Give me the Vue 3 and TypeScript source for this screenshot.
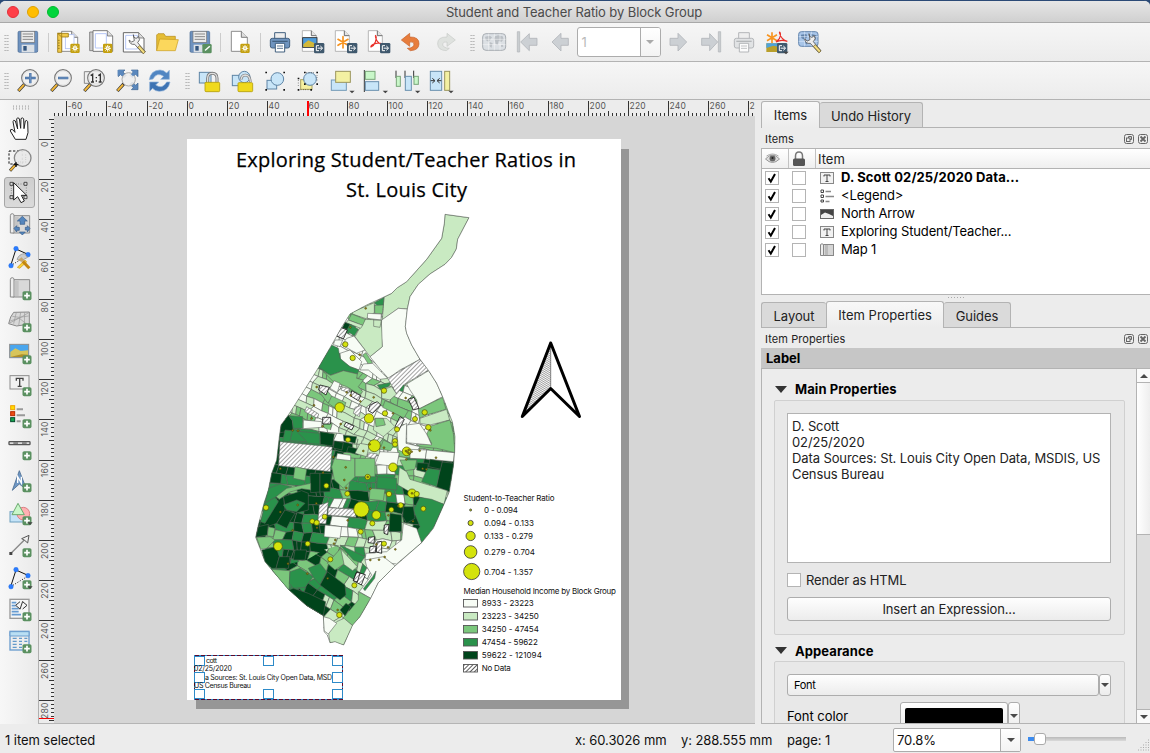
<script setup lang="ts">
type Pt = [number, number]
interface Shape { c: number | 'h' | 'b'; p: string }
interface Dot { x: number; y: number; r: number }

const palette = ['#f7fcf5', '#c9eac2', '#7bc77c', '#2a924b', '#00441b']

/* ---------- icons (72-unit grid) ---------- */
const gold = (x: number, y: number) => `<g transform="translate(${x} ${y})"><rect width="28" height="28" rx="4" fill="#c4a00f"/><path d="M14 4v20M4 14h20M7 7l14 14M21 7L7 21" stroke="#fff" stroke-width="2.6"/><circle cx="14" cy="14" r="6" fill="#fff"/><circle cx="14" cy="14" r="3" fill="#e3cf7a"/></g>`
const plus = `<g transform="translate(43.500 42.500)"><rect width="27" height="27" rx="5" fill="#5a9060"/><path d="M13.500 5v17M5 13.500h17" stroke="#fff" stroke-width="5"/></g>`
const exp = (x: number, y: number) => `<g transform="translate(${x} ${y})"><rect width="31" height="31" rx="4" fill="#40596e"/><path d="M15 8H7v15h8M11 15.500h13M19 9l7 6.500-7 6.500" stroke="#fff" stroke-width="3" fill="none"/></g>`
const drop = (x: number, y: number) => `<path d="M${x} ${y}h16l-8 8z" fill="#444"/>`
const mag = `<path d="M27 44L7 66" stroke="#333" stroke-width="10"/><path d="M24 47L8 65" stroke="#f4b93a" stroke-width="6"/>`
const lens = `<circle cx="42" cy="27" r="25" fill="#f1f1f1" fill-opacity=".85" stroke="#777" stroke-width="3.500"/><circle cx="42" cy="27" r="21" fill="none" stroke="#ddd" stroke-width="2"/>`
const floppy = `<rect x="6" y="4" width="59" height="63" rx="4" fill="#6e92bf" stroke="#47678f" stroke-width="2"/><rect x="15" y="4" width="41" height="33" fill="#ececec" stroke="#777" stroke-width="2"/><path d="M20 12h31M20 20h31M20 28h31" stroke="#888" stroke-width="3"/><rect x="17" y="44" width="38" height="23" fill="#dbe0e6"/><rect x="22" y="48" width="10" height="14" fill="#34567f"/>`
const sheet = (x: number) => `<path d="M${x} 4h30l18 18v42h-48z" fill="#fff" stroke="#777" stroke-width="2.500"/><path d="M${x + 30} 4v18h18" fill="#ddd" stroke="#666" stroke-width="2.500"/>`
const scroll = `<path d="M14 8h51v52H14z" fill="#d9d9d9" stroke="#8a8a8a" stroke-width="3"/><path d="M7 8q0-6 6-6q5 0 5 6v52H7z" fill="#eee" stroke="#8a8a8a" stroke-width="3"/><path d="M20 12h12v45H20z" fill="#c5c5c5"/>`
const worldmap = (o: string) => `<g opacity="${o}"><rect x="2" y="11" width="69" height="50" rx="10" fill="#d4dae0" stroke="#8e959c" stroke-width="3"/><path d="M9 20l14-3 7 5-6 9-5 4-8-5zM23 36l9 4-4 14-5-6zM39 19l9-3 14 3 3 9-7 8-8-3-3 12-6-3-2-10-4-4zM57 45l6 0 1 5-7 0z" fill="#a6adb4"/><path d="M2 28h69M2 44h69M20 11v50M37 11v50M54 11v50" stroke="#fff" stroke-width="1.500"/></g>`
const printer = (body: string, line: string, o: string) => `<g opacity="${o}"><path d="M20 8h32v22H20z" fill="#eee" stroke="${line}" stroke-width="3"/><rect x="7" y="25" width="58" height="29" rx="6" fill="${body}" stroke="${line}" stroke-width="3"/><path d="M13 34h46" stroke="${line}" stroke-width="4"/><path d="M22 40h28v26H22z" fill="#fff" stroke="${line}" stroke-width="3"/><path d="M27 48h18M27 55h18" stroke="${line}" stroke-width="2.500"/></g>`
const wrench = `<path d="M33 11q-1 10 8 11q6-1 7-6q8 11-2 19l23 27-7 6-25-28q-15 2-17-13l8 6 8-4z" fill="#eee" stroke="#555" stroke-width="2.500"/><path d="M52 44l17 19-6 5-17-19z" fill="#f3dd7e" stroke="#69592a" stroke-width="2"/>`
const corners = `<path d="M7 12h5v5H7zM61 12h5v5h-5zM7 64h5v5H7zM61 64h5v5h-5z" fill="#111"/>`
const nodes = `<path d="M24 12L8 62M24 12L62 29" stroke="#111" stroke-width="3"/><path d="M8 62L62 29" stroke="#111" stroke-width="3" stroke-dasharray="3 5"/><g fill="#2a7bff" stroke="#1763dc"><circle cx="24" cy="11" r="7"/><circle cx="60" cy="29" r="7"/><circle cx="9" cy="62" r="7"/></g>`
const pic = `<rect x="5" y="10" width="57" height="40" fill="#4aa6ee" stroke="#8c8c8c" stroke-width="3"/><path d="M7 33l15-11 16 8 22-2v20H7z" fill="#d7c55b"/><path d="M7 48l34-8 19 1v7z" fill="#af8f28"/>`

const icons: Record<string, string> = {
  save: floppy,
  newLayout: `${sheet(17)}<rect x="28" y="14" width="26" height="42" fill="#fff" stroke="#aebff0" stroke-width="2.500"/><path d="M5 10h12v57H5zM5 10h32v11H17z" fill="#f1ca4b" stroke="#9d7c14" stroke-width="2.500"/><path d="M6 31h5M6 39h5M6 47h5M6 55h5" stroke="#77600f" stroke-width="2"/>${gold(43, 41)}`,
  duplicate: `<path d="M2 6h48v56H2z" fill="#ccc" stroke="#777" stroke-width="2.500"/><path d="M12 2h43l16 16v46H12z" fill="#fff" stroke="#666" stroke-width="2.500"/><path d="M55 2v16h16" fill="#ddd" stroke="#555" stroke-width="2"/><path d="M19 11h33v43H19z" fill="none" stroke="#b6c7f6" stroke-width="3"/>${gold(42, 41)}`,
  manager: `<path d="M4 8h46l16 16v42H4z" fill="#fff" stroke="#666" stroke-width="3"/><path d="M50 8v16h16" fill="#ddd" stroke="#555" stroke-width="2"/><path d="M11 16h35v41H11z" fill="none" stroke="#b6c7f6" stroke-width="3"/><g transform="translate(1 3)">${wrench}</g>`,
  folder: `<path d="M5 62V15l4-4h18l5 8h29v10" fill="#e5bd35" stroke="#b38a18" stroke-width="2"/><path d="M5 62l9-35 56 2-9 33z" fill="#fbd75c" stroke="#c79b20" stroke-width="2"/>`,
  saveAs: `${floppy}<rect x="43" y="42" width="28" height="28" rx="4" fill="#5a9060"/><path d="M50 64l2-6 12-11 3 3-12 11z" fill="#fff"/>`,
  addPages: `${sheet(10)}${gold(37, 41)}`,
  print: printer('#6f94bf', '#42607f', '1'),
  exportImage: `<path d="M4 2h27l15 15v47H4z" fill="#fff" stroke="#aaa" stroke-width="2.500"/><path d="M31 2v15h15" fill="#e4e4e4" stroke="#555" stroke-width="2.500"/><rect x="5" y="23" width="43" height="29" fill="#4f9cda" stroke="#222" stroke-width="2.500"/><path d="M7 43l15-12 24 11v9H7z" fill="#d3b838"/>${exp(39, 39)}`,
  exportSvg: `<path d="M4 2h27l15 15v47H4z" fill="#fff" stroke="#aaa" stroke-width="2.500"/><path d="M31 2v15h15" fill="#e4e4e4" stroke="#555" stroke-width="2.500"/><path d="M27 20v34M12 28l30 18M42 28L12 46" stroke="#f79420" stroke-width="5" stroke-linecap="round"/>${exp(39, 39)}`,
  exportPdf: `<path d="M4 2h27l15 15v47H4z" fill="#fff" stroke="#aaa" stroke-width="2.500"/><path d="M31 2v15h15" fill="#e4e4e4" stroke="#555" stroke-width="2.500"/><path d="M24 16q7 2 1 20q-4 11-13 15q-3-5 12-10q15-4 20 0q-14 1-19-22" fill="none" stroke="#e9302a" stroke-width="3.500"/>${exp(39, 39)}`,
  undo: `<path d="M4 30L29 10v11q29-1 28 21q-1 19-26 20l-9-7q20-1 20-13q-1-8-13-6v13z" fill="#e77d3c" stroke="#c5602b" stroke-width="2"/>`,
  redo: `<path d="M67 30L42 10v11q-29-1-28 21q1 19 26 20l9-7q-20-1-20-13q1-8 13-6v13z" fill="#dfe2df" stroke="#c7cac7" stroke-width="2"/>`,
  atlas: worldmap('.72'),
  first: `<path d="M7 5h7v61H7z" fill="#c9cdd0" stroke="#b0b4b8" stroke-width="2"/><path d="M17 36L43 11v14h23v21H43v16z" fill="#ccd0d4" stroke="#b2b6ba" stroke-width="2.500"/>`,
  prev: `<path d="M12 36L39 10v15h22v21H39v17z" fill="#ccd0d4" stroke="#b2b6ba" stroke-width="2.500"/>`,
  next: `<path d="M62 36L36 10v15H12v21h24v17z" fill="#ccd0d4" stroke="#b2b6ba" stroke-width="2.500"/>`,
  last: `<path d="M58 5h7v61h-7z" fill="#c9cdd0" stroke="#b0b4b8" stroke-width="2"/><path d="M56 36L32 11v14H8v21h24v16z" fill="#ccd0d4" stroke="#b2b6ba" stroke-width="2.500"/>`,
  printAtlas: printer('#dfe1e3', '#aaadb0', '.85'),
  exportAtlas: `<path d="M21 7v32M6 14l30 18M36 14L6 32" stroke="#f79420" stroke-width="5"/><path d="M43 5q7 5 0 21l-10 10q15-9 34-2q-18-4-24-27" fill="none" stroke="#e9302a" stroke-width="3.500"/><path d="M4 40h38v26H4z" fill="#b99f2b"/><path d="M4 40h38v11l-17-4-21 7z" fill="#4fa3da"/>${exp(36, 39)}${drop(55, 65)}`,
  atlasSettings: `<rect x="2" y="5" width="58" height="44" rx="8" fill="#a8c5e8" stroke="#6485ae" stroke-width="3"/><path d="M9 14l16-2 3 9-9 8-9-5zM23 30l8 2-4 12-6-5zM39 12l17 4-4 15-12-2z" fill="#6283aa"/><path d="M2 20h58M2 34h58M20 5v44M40 5v44" stroke="#dbeafa" stroke-width="2"/>${wrench}`,
  zoomIn: `${mag}${lens}<path d="M43 12v31M27 27h32" stroke="#41699d" stroke-width="7"/><path d="M43 13v29M28 27h30" stroke="#6b92c3" stroke-width="3"/>`,
  zoomOut: `${mag}${lens}<path d="M27 27h31" stroke="#41699d" stroke-width="7"/><path d="M28 27h29" stroke="#7ba0cc" stroke-width="3"/>`,
  zoomActual: `<path d="M7 8h50v35H7z" fill="#eee" stroke="#888" stroke-width="3"/>${mag}${lens}<path d="M26 20l6-4v23M49 20l6-4v23M27 39h9M50 39h9" fill="none" stroke="#333" stroke-width="4"/><path d="M41 24h4v4h-4zM41 34h4v4h-4z" fill="#333"/>`,
  zoomFull: `<path d="M10 3h20L24 9l10 10-7 7-10-10-7 7zM69 3H49l6 6-10 10 7 7 10-10 7 7zM69 62H49l6-6-10-10 7-7 10 10 7-7z" fill="#5b88bd" stroke="#3d648f" stroke-width="2"/>${mag}<circle cx="41" cy="31" r="20" fill="#eee" fill-opacity=".88" stroke="#aaa" stroke-width="3"/><path d="M8 3h18l-6 6 7 7-6 6-7-7-6 6z" fill="#5b88bd"/><path d="M66 4H50l5 5-7 7 6 6 7-7 5 5z" fill="#5b88bd"/>`,
  refresh: `<path d="M4 32Q8 4 36 3q11 0 20 9l8-8v27H38l9-9q-20-14-32 8z" fill="#5186c2" stroke="#8fb2da" stroke-width="2"/><path d="M66 39q-5 28-32 28q-13 0-20-9l-9 9V39h27l-9 9q20 14 33-9z" fill="#3d73b3" stroke="#8fb2da" stroke-width="2"/>`,
  lock: `<rect x="7" y="10" width="35" height="32" fill="#c8e5f8" stroke="#5e84a5" stroke-width="3"/><path d="M32 41V28q0-15 14-15t14 15v13" fill="none" stroke="#777" stroke-width="9"/><path d="M32 41V28q0-15 14-15t14 15v13" fill="none" stroke="#ddd" stroke-width="4"/><rect x="24" y="40" width="44" height="28" rx="3" fill="#f0d91c" stroke="#b39d0b" stroke-width="2.500"/>`,
  unlock: `<rect x="7" y="19" width="31" height="31" fill="#c8e5f8" stroke="#5e84a5" stroke-width="3"/><circle cx="43" cy="24" r="17" fill="#c8e5f8" stroke="#5e84a5" stroke-width="3"/><path d="M33 32q2-14 14-14q13 1 14 22" fill="none" stroke="#777" stroke-width="8"/><path d="M33 32q2-14 14-14q13 1 14 22" fill="none" stroke="#ddd" stroke-width="4"/><rect x="24" y="41" width="44" height="27" rx="3" fill="#f0d91c" stroke="#b39d0b" stroke-width="2.500"/>`,
  group: `<g transform="translate(0 -4)"><rect x="12" y="38" width="29" height="26" fill="#c8e5f8" stroke="#5e84a5" stroke-width="3"/><circle cx="43" cy="34" r="19" fill="#c8e5f8" stroke="#5e84a5" stroke-width="3"/>${corners}</g>`,
  ungroup: `<rect x="14" y="32" width="34" height="29" fill="#f5f0a0" stroke="#aaa362" stroke-width="3"/><circle cx="42" cy="30" r="19" fill="#c8e5f8" stroke="#5e84a5" stroke-width="3"/><g fill="#111"><path d="M24 8h5v5h-5zM61 8h5v5h-5zM24 43h5v5h-5zM61 43h5v5h-5zM5 26h5v5H5zM5 60h5v5H5zM43 60h5v5h-5z"/></g><path d="M31 11h25M7 34v21M14 62h25M63 18v20" stroke="#111" stroke-width="2" stroke-dasharray="2 5"/>`,
  raise: `<rect x="7" y="33" width="45" height="31" fill="#c8e5f8" stroke="#749ab6" stroke-width="3"/><rect x="20" y="7" width="44" height="33" fill="#f3f0a2" stroke="#9b955d" stroke-width="3"/>${drop(61, 65)}`,
  align: `<path d="M7 3v66" stroke="#333" stroke-width="3"/><rect x="10" y="7" width="29" height="24" fill="#c9f7c9" stroke="#79a679" stroke-width="3"/><rect x="10" y="38" width="40" height="26" fill="#c8e5f8" stroke="#6a90ae" stroke-width="3"/>${drop(62, 65)}`,
  distribute: `<path d="M3 5v22M30 5v22M56 5v22" stroke="#333" stroke-width="3"/><rect x="4" y="22" width="12" height="30" fill="#c9f7c9" stroke="#79a679" stroke-width="3"/><rect x="31" y="22" width="18" height="42" fill="#c8e5f8" stroke="#6a90ae" stroke-width="3"/><rect x="57" y="22" width="13" height="24" fill="#c9f7c9" stroke="#79a679" stroke-width="3"/>${drop(60, 65)}`,
  resize: `<rect x="7" y="7" width="34" height="57" fill="#c8e5f8" stroke="#6a90ae" stroke-width="3"/><rect x="50" y="7" width="15" height="57" fill="#f3f0a2" stroke="#9b955d" stroke-width="3"/><path d="M8 35h11M13 28l8 7-8 7M40 35H29M35 28l-8 7 8 7" stroke="#333" stroke-width="3" fill="none"/>${drop(61, 65)}`,
  pan: `<path d="M22 70L7 45q-1-7 7-4l7 8L15 17q1-7 7-2l7 24L26 9q2-7 8-1l4 29L39 8q5-6 8 1l1 29 4-23q5-4 7 2l1 33-6 20z" fill="#fff" stroke="#222" stroke-width="3"/>`,
  zoomTool: `<path d="M3 9h40v39H3z" fill="none" stroke="#111" stroke-width="3" stroke-dasharray="7 5"/><path d="M26 46L6 68" stroke="#333" stroke-width="9"/><path d="M22 51L7 67" stroke="#edb43c" stroke-width="6"/><circle cx="44" cy="30" r="25" fill="#e8e8e8" fill-opacity=".93" stroke="#888" stroke-width="4"/><path d="M53 20v25M30 42h17" stroke="#aaa" stroke-width="2" stroke-dasharray="2 5"/><path d="M17 50h14M24 43v14" stroke="#111" stroke-width="4"/>`,
  select: `<path d="M10 12h45v39H10z" fill="none" stroke="#333" stroke-width="2" stroke-dasharray="2 5"/><path d="M6 7h9v9H6zM48 7h9v9h-9zM6 47h9v9H6zM48 47h9v9h-9z" fill="#ddd" stroke="#333" stroke-width="2.500"/><path d="M17 8v52l12-10 10 18 10-5-9-17h16z" fill="#fff" stroke="#222" stroke-width="3"/>`,
  moveContent: `${scroll}<path d="M43 10l15 14h-8v10H36V24h-8zM43 66l-9-9h18zM18 46l8-8v5h8v9h-8v5zM66 46l-8-8v5h-6v8h6v6z" fill="#5586bd" stroke="#355b8a" stroke-width="2"/>`,
  editNodes: `${nodes}<path d="M27 43q6-16 22-17l10 11-20 11z" fill="#ccc" stroke="#888" stroke-width="2"/><path d="M28 67l23-22 5 6-21 19z" fill="#f9d237" stroke="#ca941d" stroke-width="2"/><path d="M44 49l20 21" stroke="#c38612" stroke-width="9"/><path d="M30 45l11-8 7 9-6 5z" fill="#c5a66e"/>`,
  addMap: scroll + plus,
  add3d: `<path d="M8 24L17 10l47-1v36l-38 6-24-7z" fill="#d8d8d8" stroke="#888" stroke-width="3"/><path d="M13 22l20 3 29-4M7 36l26-9 25 20M25 10l-8 34M38 10l-6 40M50 10l-1 37M3 43l39-20 20-12" stroke="#999" stroke-width="2" fill="none"/>${plus}`,
  addPicture: pic + plus,
  addLabel: `<rect x="6" y="8" width="57" height="40" fill="#f1f1f1" stroke="#8b8b8b" stroke-width="3"/><path d="M25 23v-7h20v7M35 16v23M29 40h12" fill="none" stroke="#444" stroke-width="4"/>${plus}`,
  addLegend: `<g stroke-width="3"><rect x="8" y="2" width="12" height="12" fill="#ffdc00" stroke="#f0a100"/><rect x="8" y="20" width="12" height="12" fill="#ed4c12" stroke="#b52a00"/><rect x="8" y="38" width="12" height="12" fill="#12a34e" stroke="#064a2b"/></g><path d="M26 13h19M26 31h25M26 49h12" stroke="#999" stroke-width="6"/>${plus}`,
  addScale: `<rect x="3" y="14" width="63" height="9" rx="2" fill="#ddd" stroke="#555" stroke-width="4"/><path d="M16 18h14M42 18h14" stroke="#888" stroke-width="6"/>${plus}`,
  addNorth: `<path d="M34 5l22 57-22-17-21 19z" fill="#6f97c4" stroke="#4a6c91" stroke-width="2.500"/><path d="M29 42V23l11 19V23" stroke="#fff" stroke-width="4" fill="none"/>${plus}`,
  addShape: `<rect x="6" y="29" width="43" height="31" fill="#c5e4f8" stroke="#6d9fbe" stroke-width="3"/><circle cx="46" cy="35" r="19" fill="#ffb0b2" stroke="#d98084" stroke-width="3"/><path d="M30 4L12 38h37z" fill="#c9f7c9" stroke="#6ba96f" stroke-width="3"/>${plus}${drop(58, 61)}`,
  addArrow: `<path d="M9 58L52 15" stroke="#888" stroke-width="4"/><path d="M63 4l-4 23-9-8-9-5z" fill="#eee" stroke="#555" stroke-width="3"/><path d="M4 54h9v9H4z" fill="#444"/>${plus}`,
  addNodes: nodes + plus + drop(58, 61),
  addHtml: `<rect x="6" y="4" width="57" height="57" fill="#f6f6f6" stroke="#999" stroke-width="4"/><path d="M11 14h14M11 23h12M11 32h21M11 41h21M11 50h28" stroke="#669bd1" stroke-width="5"/><path d="M36 11L23 22l13 11M44 11l13 11-13 11M44 10l-8 24" stroke="#333" stroke-width="3" fill="none"/>${plus}`,
  addTable: `<rect x="6" y="4" width="57" height="56" fill="#eee" stroke="#6a9dce" stroke-width="4"/><path d="M6 5h57v13H6z" fill="#b9dff4" stroke="#6a9dce" stroke-width="3"/><path d="M14 25h12M33 25h9M49 25h9M14 34h12M33 34h9M49 34h9M14 43h12M33 43h9M14 52h12M33 52h9" stroke="#639aca" stroke-width="4"/>${plus}`,
}

const bar1: string[] = ['save', '|', 'newLayout', 'duplicate', 'manager', 'folder', 'saveAs', '|', 'addPages', '|', 'print', 'exportImage', 'exportSvg', 'exportPdf', 'undo', 'redo', ':', 'atlas', 'first', 'prev', 'page', 'next', 'last', 'printAtlas', 'exportAtlas', 'atlasSettings']
const bar2: string[] = ['zoomIn', 'zoomOut', 'zoomActual', 'zoomFull', 'refresh', ':', 'lock', 'unlock', 'group', 'ungroup', 'raise', 'align', 'distribute', 'resize']
const tools: string[] = ['pan', 'zoomTool', 'select', 'moveContent', 'editNodes', 'addMap', 'add3d', 'addPicture', 'addLabel', 'addLegend', 'addScale', 'addNorth', 'addShape', 'addArrow', 'addNodes', 'addHtml', 'addTable']

/* ---------- rulers ---------- */
const unit = 2.0055
interface Tick { at: number; kind: number; label: string }
function ticks(zero: number, from: number, to: number): Tick[] {
  const out: Tick[] = []
  for (let u = -80; u <= 300; u += 2) {
    const at = Math.floor(zero + u * unit)
    if (at < from || at > to) continue
    const kind = u % 20 === 0 ? 2 : u % 10 === 0 ? 1 : 0
    out.push({ at, kind, label: kind === 2 ? String(u) : '' })
  }
  return out
}
const hTicks = ticks(187.2, 54, 754)
const vTicks = ticks(139.2, 117, 722)

/* ---------- block groups ---------- */
const income = [
  '000000000221000000000', '000000000341100000000', '000000000011110000000', '000000001001100000000',
  '000000033000210000000', '000000333300010000000', '000000122220000000000', '000000110122113100000',
  '000000200101110010022', '000011022101022201222', '000122000110002200111', '004331020110021000122',
  '004333211011011000122', '004333343411121002222', '004333334221002200000', '044333332222001234344',
  '043424442233333213344', '033233444233333221111', '034344433242230421311', '034434430343344244333',
  '014443400344332434333', '442343440131121440333', '422434310012121200000', '223344411211010110000',
  '034444212131000000000', '034432322211000000000', '003323342330100000000', '003332344310000000000',
  '000344433312000000000', '000044412422000000000', '000004410112200000000', '000000000111000000000', '000000001111000000000',
]
const rnd = (a: number, b: number, k: number): number => {
  const s = Math.sin(a * 127.1 + b * 311.7 + k * 74.7) * 43758.5453
  return s - Math.floor(s)
}
function tone(x: number, y: number): number {
  const row = Math.min(32, Math.max(0, Math.floor((y - 60) / 30)))
  const col = Math.min(20, Math.max(0, Math.floor((x - 40) / 30)))
  return Number(income[row].charAt(col))
}
function lattice(cx: number, cy: number, deg: number, w: number, h: number, n: number, seed: number): Shape[] {
  const a = (deg * Math.PI) / 180
  const v = (i: number, j: number): Pt => {
    const x = i * w + (rnd(i, j, seed) - 0.5) * w * 0.3 + (j % 2) * w * 0.25
    const y = j * h + (rnd(i, j, seed + 1) - 0.5) * h * 0.25
    return [cx + x * Math.cos(a) - y * Math.sin(a), cy + x * Math.sin(a) + y * Math.cos(a)]
  }
  const out: Shape[] = []
  const add = (p: Pt[]) => {
    const x = p.reduce((s, q) => s + q[0], 0) / p.length
    const y = p.reduce((s, q) => s + q[1], 0) / p.length
    if (x < 20 || x > 680 || y < 40 || y > 1090) return
    out.push({ c: tone(x, y), p: p.map(q => q.map(t => t.toFixed(1)).join(',')).join(' ') })
  }
  const mid = (p: Pt, q: Pt): Pt => [(p[0] + q[0]) / 2, (p[1] + q[1]) / 2]
  for (let j = -n; j < n; j++) {
    for (let i = -n; i < n; i++) {
      const r = rnd(i, j, seed + 2)
      const q = [v(i, j), v(i + 1, j), v(i + 1, j + 1), v(i, j + 1)]
      if (r < 0.28) {
        add([q[0], q[1], v(i + 2, j), v(i + 2, j + 1), q[2], q[3]])
        i++
      } else if (r > 0.88) {
        const m = mid(q[0], q[1])
        const k = mid(q[2], q[3])
        add([q[0], m, k, q[3]])
        add([m, q[1], q[2], k])
      } else add(q)
    }
  }
  return out
}
const zones = [
  { id: 'zMid', cells: lattice(330, 600, 5, 27, 28, 22, 3) },
  { id: 'zNorth', cells: lattice(330, 280, 25, 26, 22, 22, 9) },
  { id: 'zSouth', cells: lattice(260, 850, 34, 33, 28, 16, 5) },
]

const outline = '615,-227 687,-217 653,-152 649,-123 635,-98 615,-77 570,-48 535,-17 510,20 502,57 496,110 500,130 515,165 540,208 566,242 590,280 610,325 625,365 637,395 645,440 644,485 640,530 628,605 612,643 580,715 545,758 465,828 415,878 392,925 360,980 338,1005 311,1065 285,1055 270,1058 262,1035 252,1025 250,977 200,947 147,900 100,845 75,815 60,775 47,742 55,705 72,640 85,600 95,550 110,510 118,440 123,405 145,375 190,305 236,232 275,165 305,112 330,72 380,45 432,21 455,10 472,-7 500,-25 560,-92 605,-155 613,-200'

const north: Shape[] = [
  { c: 1, p: '432,21 455,10 472,-7 500,-25 560,-92 605,-155 613,-200 615,-227 687,-217 653,-152 649,-123 635,-98 615,-77 570,-48 535,-17 510,20 502,57 475,55 427,90' },
  { c: 0, p: '425,90 475,55 502,57 496,110 500,130 515,165 540,208 480,240 445,265 418,235 390,200 427,170 423,130' },
  { c: 1, p: '375,88 424,90 427,170 390,200 345,140 360,112' },
  { c: 1, p: '335,67 403,38 403,68 378,86 340,73' },
  { c: 3, p: '403,38 432,22 430,45 415,50' },
  { c: 2, p: '404,46 430,45 427,72 404,70' },
  { c: 0, p: '383,70 424,72 423,90 382,85' },
  { c: 1, p: '401,90 424,91 420,112 401,109' },
  { c: 2, p: '335,72 376,88 368,106 325,90' },
  { c: 1, p: '325,90 368,106 362,115 318,98' },
  { c: 4, p: '315,97 335,105 325,120 307,113' },
  { c: 3, p: '330,103 355,118 343,138 320,122' },
  { c: 0, p: '342,138 375,180 350,190 305,165 320,145' },
  { c: 0, p: '300,190 330,180 365,215 357,240 330,230 302,210' },
  { c: 2, p: '378,188 398,220 385,222 368,195' },
  { c: 0, p: '398,220 443,265 420,268 385,240 360,240 370,222' },
  { c: 0, p: '285,150 308,150 300,170 280,164' },
  { c: 3, p: '275,165 295,175 300,205 330,230 357,240 352,252 310,242 270,256 236,230' },
  { c: 2, p: '250,245 272,256 310,242 352,252 350,265 370,270 355,290 368,305 360,314 320,290 280,275' },
  { c: 0, p: '500,282 566,242 590,280 608,320 535,358 530,330 510,300' },
  { c: 2, p: '535,358 608,322 618,358 560,375 538,385' },
  { c: 1, p: '540,385 620,358 629,390 570,405 540,400' },
  { c: 2, p: '572,408 630,390 640,430 645,488 590,475 540,470 530,465 575,460 560,432' },
  { c: 0, p: '500,405 538,400 560,432 575,465 540,462 500,458' },
  { c: 0, p: '470,415 500,400 498,460 540,470 520,500 475,480' },
  { c: 3, p: '412,285 455,277 445,290 420,298' },
  { c: 1, p: '425,300 455,290 470,312 450,330 425,325' },
  { c: 2, p: '435,332 505,362 492,384 428,352' },
  { c: 2, p: '240,308 262,302 284,330 262,338' },
  { c: 2, p: '265,340 275,318 318,338 305,368' },
  { c: 0, p: '270,295 282,272 300,280 292,308' },
  { c: 4, p: '123,405 145,375 157,392 160,422 120,428' },
  { c: 3, p: '147,377 188,380 188,415 160,415 157,392' },
  { c: 3, p: '135,420 240,430 240,463 128,453' },
  { c: 3, p: '160,413 200,455 150,452' },
  { c: 4, p: '240,425 283,432 278,468 241,463' },
  { c: 0, p: '190,390 245,395 245,412 190,416' },
  { c: 1, p: '405,385 440,385 465,410 430,440 400,420' },
  { c: 2, p: '405,385 430,385 436,405 408,410' },
  { c: 2, p: '430,450 462,465 452,482 420,478' },
  { c: 4, p: '283,452 310,458 306,480 280,474' },
  { c: 4, p: '310,435 350,440 345,460 312,452' },
  { c: 4, p: '325,470 360,478 355,495 320,485' },
  { c: 0, p: '420,485 478,488 470,530 405,522' },
  { c: 2, p: '285,500 345,505 345,560 310,595 283,570 275,530' },
  { c: 2, p: '345,505 405,505 405,560 345,560' },
  { c: 1, p: '360,460 388,465 380,500 345,490' },
  { c: 0, p: '292,490 332,496 332,512 288,507' },
  { c: 0, p: '510,478 560,480 556,507 510,505' },
  { c: 0, p: '560,480 643,488 640,515 556,507' },
  { c: 4, p: '570,508 607,514 604,538 566,530' },
  { c: 4, p: '607,516 642,520 628,605 588,590' },
  { c: 4, p: '532,518 565,520 562,548 530,540' },
  { c: 3, p: '562,535 600,540 590,590 545,575' },
  { c: 'h', p: '443,265 540,208 566,240 490,285 470,312' },
  { c: 'h', p: '120,455 277,471 271,545 116,527' },
  { c: 'h', p: '200,350 236,372 232,385 194,365' },
  { c: 'b', p: '302,112 322,120 310,147 290,138' },
  { c: 'b', p: '505,328 522,322 537,355 520,360' },
  { c: 'b', p: '248,382 272,382 272,402 248,402' },
  { c: 'b', p: '318,397 342,408 335,420 312,408' },
  { c: 'h', p: '345,352 365,346 358,380 340,370' },
  { c: 'b', p: '480,380 493,388 477,420 466,408' },
  { c: 'b', p: '390,345 412,335 422,345 398,370 385,362' },
  { c: 'b', p: '240,285 268,292 258,315 236,300' },
  { c: 'h', p: '303,290 330,296 326,308 303,300' },
  { c: 'b', p: '335,302 362,317 355,332 332,318' },
  { c: 'h', p: '386,488 412,492 405,506 381,500' },
]
const south: Shape[] = [
  { c: 4, p: '95,38 125,42 122,70 90,68' },
  { c: 2, p: '165,20 200,28 195,62 160,55' },
  { c: 4, p: '210,40 240,40 240,96 212,98' },
  { c: 4, p: '240,40 275,40 270,95 240,96' },
  { c: 3, p: '85,85 120,72 155,80 110,110 75,130' },
  { c: 4, p: '130,110 185,92 205,100 205,150 165,160 135,140' },
  { c: 4, p: '72,150 130,110 135,150 110,190 55,210' },
  { c: 4, p: '110,190 135,150 165,160 150,185 140,205' },
  { c: 3, p: '130,135 170,120 195,130 170,155 140,150' },
  { c: 2, p: '108,110 140,85 212,70 212,90 185,86 150,96 118,118' },
  { c: 3, p: '75,130 105,112 115,125 75,190 62,185' },
  { c: 4, p: '47,232 55,200 85,193 82,225' },
  { c: 2, p: '85,200 105,205 100,230 82,228' },
  { c: 2, p: '50,232 90,230 105,240 80,265 62,268' },
  { c: 4, p: '65,270 108,260 118,290 108,325 95,325 75,305' },
  { c: 4, p: '118,290 150,290 145,325 108,325' },
  { c: 4, p: '165,270 200,270 195,300 160,300' },
  { c: 2, p: '95,328 150,332 147,390 120,365' },
  { c: 3, p: '150,335 180,325 220,350 195,382 160,385 148,370' },
  { c: 3, p: '205,325 240,310 260,335 240,375 220,352' },
  { c: 4, p: '147,390 160,385 205,400 257,425 250,467 200,437' },
  { c: 4, p: '262,335 315,375 318,405 300,420 240,375' },
  { c: 1, p: '300,265 352,320 338,332 310,312 288,300' },
  { c: 2, p: '302,265 312,312 285,330 262,310' },
  { c: 3, p: '300,255 375,290 362,308 340,300' },
  { c: 0, p: '255,195 305,200 300,235 252,230' },
  { c: 2, p: '390,85 435,88 430,122 388,118' },
  { c: 3, p: '412,50 470,55 470,90 410,85' },
  { c: 1, p: '478,22 500,35 510,58 622,92 612,133 575,122 540,112 500,90 474,75' },
  { c: 2, p: '480,0 530,0 525,28 495,32' },
  { c: 3, p: '540,112 575,118 612,133 580,205 545,248 525,220 540,200 520,150' },
  { c: 4, p: '490,140 520,140 525,175 500,190 488,170' },
  { c: 4, p: '450,160 485,165 485,215 447,215' },
  { c: 0, p: '490,190 530,205 545,248 470,312 375,300 378,280 440,275 485,240' },
  { c: 0, p: '375,300 430,290 466,318 415,368 392,415 358,395 395,345 380,320' },
  { c: 3, p: '408,333 404,355 375,392 370,386 398,350' },
  { c: 2, p: '355,395 392,415 360,470 338,497 308,475 330,450 355,420' },
  { c: 4, p: '300,450 318,430 333,440 315,468' },
  { c: 1, p: '265,515 290,485 312,475 338,497 311,555 270,548' },
  { c: 0, p: '250,470 268,475 290,490 265,522 252,512' },
  { c: 'h', p: '238,135 265,127 258,192 233,190' },
  { c: 'h', p: '265,143 345,148 348,172 263,165' },
  { c: 'b', p: '386,232 404,230 402,250 384,248' },
  { c: 'b', p: '390,260 408,258 406,278 388,278' },
  { c: 'b', p: '411,246 425,244 425,280 409,276' },
  { c: 'b', p: '433,195 447,193 443,224 432,220' },
  { c: 'b', p: '350,336 376,344 364,375 340,362' },
  { c: 'b', p: '350,336 360,340 352,366 340,362' },
]

const dots = (s: string, dy: number): Dot[] => s.split(' ').map(t => {
  const [x, y, r] = t.split(',').map(Number)
  return { x, y: y + dy, r: r || 2.8 }
})
const schools: Dot[] = [
  ...dots('316,163,8 338,204,8 432,302,8 299,352,14 387,385,14 435,370,8 554,367,8 525,387,7.5 565,412,8 471,418,7.5 324,449,7.5 403,467,18 465,453,7.5 465,463,7.5 500,484,13 377,55 331,112 359,194 230,291 320,307 332,316 361,334 222,346 215,385 248,409 302,402 401,322 497,324 459,370 571,421 158,421 174,422 370,483 389,463 432,473 515,485 539,482 588,503 499,508 280,501 317,532 506,480 508,491 498,483 503,487', 0),
  ...dots('259,77,7.5 78,143,8 114,259,13 203,251,7.5 271,298,7.5 343,376,7.5 298,465,8 322,101,7.5 364,148,23 409,165,13 397,190,7.5 362,215,7.5 254,170,7.5 217,184,7.5 230,188,8 383,51,8 459,22,13 447,102,8 516,100,13 530,102,8 482,136,8 454,149,7.5 550,146,7.5 432,251,7.5 121,26 249,38 313,60 319,84 391,86 173,135 229,130 121,156 158,211 231,203 144,311 202,341 263,355 293,450 323,181 445,166 519,184 466,268 434,291 417,299 391,300 286,240 282,251 409,253 444,262 548,26 559,28 475,138 383,51 516,100', 510),
]
const fillOf = (c: Shape['c']): string => (typeof c === 'number' ? palette[c] : 'url(#hatch)')

const ratioRows = [
  { y: 510, r: 1, w: 34, t: '0 - 0.094' }, { y: 523, r: 2.6, w: 50, t: '0.094 - 0.133' },
  { y: 536, r: 4.6, w: 49, t: '0.133 - 0.279' }, { y: 552, r: 6.3, w: 51, t: '0.279 - 0.704' },
  { y: 571.5, r: 8.1, w: 49, t: '0.704 - 1.357' },
]
const incomeRows = [
  { w: 52, t: '8933 - 23223' }, { w: 57, t: '23223 - 34250' }, { w: 57, t: '34250 - 47454' },
  { w: 56, t: '47454 - 59622' }, { w: 60, t: '59622 - 121094' }, { w: 29, t: 'No Data' },
]
const handles: Pt[] = [[194, 656], [263, 656], [332, 656], [194, 672.5], [332, 672.5], [194, 689], [263, 689], [332, 689]]

const items = [
  { t: 'D. Scott 02/25/2020 Data...', k: 'T', b: true }, { t: '<Legend>', k: 'L', b: false },
  { t: 'North Arrow', k: 'P', b: false }, { t: 'Exploring Student/Teacher...', k: 'T', b: false }, { t: 'Map 1', k: 'M', b: false },
]
const itemIcons: Record<string, string> = {
  T: '<rect x=".5" y="1.500" width="13" height="11" fill="#f2f2f2" stroke="#888"/><path d="M4 5.500v-1.500h6v1.500M7 4v6M5.500 10.500h3" stroke="#444" fill="none"/>',
  L: '<path d="M1 1h2.500v2.500H1zM1 6h2.500v2.500H1zM1 11h2.500v2H1z" fill="#fff" stroke="#444"/><path d="M5.500 2.500h5.500M5.500 7.500h8.500M5.500 12.500h4" stroke="#888" stroke-width="1.400"/>',
  P: '<rect x=".5" y="2.500" width="13" height="9" fill="#eee" stroke="#666"/><path d="M1 3h12v6L9 7 5 5.500 1 8z" fill="#444"/>',
  M: '<rect x="2.500" y="1.500" width="11" height="11" fill="#d5d5d5" stroke="#888"/><path d="M5 2h3v10H5z" fill="#bbb"/><path d="M.5 12.500v-11q1.500-1.500 3 0v11z" fill="#eee" stroke="#888"/>',
}
</script>

<template>
  <div class="window">
    <header class="titlebar">
      <span class="light red" /><span class="light amber" /><span class="light green" />
      <h1>Student and Teacher Ratio by Block Group</h1>
    </header>

    <div class="toolbar">
      <span class="grip" />
      <template v-for="(n, i) in bar1" :key="i">
        <span v-if="n === '|'" class="sep" />
        <span v-else-if="n === ':'" class="gap"><span class="grip" /></span>
        <span v-else-if="n === 'page'" class="spin"><span>1</span><i><b class="down pale" /></i></span>
        <span v-else class="btn"><svg viewBox="0 0 72 72" v-html="icons[n]" /></span>
      </template>
    </div>
    <div class="toolbar second">
      <span class="grip" />
      <template v-for="(n, i) in bar2" :key="i">
        <span v-if="n === ':'" class="gap"><span class="grip" /></span>
        <span v-else class="btn"><svg viewBox="0 0 72 72" v-html="icons[n]" /></span>
      </template>
    </div>

    <main class="body">
      <aside class="tools">
        <span class="hgrip" />
        <span v-for="n in tools" :key="n" class="tool" :class="{ on: n === 'select' }"><svg viewBox="0 0 72 72" v-html="icons[n]" /></span>
      </aside>

      <svg class="canvas" viewBox="39 100 716 624">
        <defs>
          <pattern id="hatch" width="9" height="9" patternUnits="userSpaceOnUse" patternTransform="rotate(45)"><rect width="9" height="9" fill="#fff" /><path d="M1 0v9" stroke="#444" stroke-width="1.800" /></pattern>
          <pattern id="hatchSmall" width="3" height="3" patternUnits="userSpaceOnUse" patternTransform="rotate(45)"><rect width="3" height="3" fill="#fff" /><path d="M.5 0v3" stroke="#333" stroke-width=".8" /></pattern>
          <pattern id="arrowHatch" width="1.800" height="1.800" patternUnits="userSpaceOnUse" patternTransform="rotate(-58)"><rect width="1.800" height="1.800" fill="#fff" /><path d="M.5 0v1.800" stroke="#666" stroke-width=".6" /></pattern>
          <clipPath id="city"><polygon :points="outline" /></clipPath>
          <clipPath id="zMid"><rect x="0" y="400" width="700" height="700" /></clipPath>
          <clipPath id="zNorth"><path d="M100 0H700V400L540 470 440 475 290 425 200 400 100 380z" /></clipPath>
          <clipPath id="zSouth"><path d="M90 835L200 810 250 780 300 765 345 790 400 820 420 1100H100z" /></clipPath>
        </defs>
        <rect x="39" y="100" width="716" height="624" fill="#ececec" />
        <rect x="54" y="116" width="701" height="608" fill="#d6d6d6" />
        <g shape-rendering="crispEdges">
          <rect v-for="t in hTicks" :key="'h' + t.at" :x="t.at" :y="t.kind === 2 ? 101 : t.kind ? 111 : 113" width="1" :height="t.kind === 2 ? 15 : t.kind ? 5 : 3" fill="#333" />
          <rect v-for="t in vTicks" :key="'v' + t.at" :y="t.at" :x="t.kind === 2 ? 39 : t.kind ? 49 : 51" height="1" :width="t.kind === 2 ? 15 : t.kind ? 5 : 3" fill="#333" />
          <rect x="307" y="101" width="2" height="15" fill="#f00" /><rect x="39" y="718" width="15" height="1" fill="#f00" />
          <rect x="39" y="723" width="716" height="1" fill="#b5b5b5" />
          <rect x="196" y="149" width="433" height="560" fill="#969696" />
          <rect x="187" y="139" width="434" height="561" fill="#fff" />
        </g>
        <g class="scale">
          <template v-for="t in hTicks" :key="'a' + t.at"><text v-if="t.kind === 2" :x="t.at + 1.5" y="109">{{ t.at > 745 ? '2' : t.label }}</text></template>
          <template v-for="t in vTicks" :key="'b' + t.at"><text v-if="t.kind === 2" text-anchor="end" :transform="`translate(47.500 ${t.at + 2.5}) rotate(-90)`">{{ t.label }}</text></template>
        </g>

        <g class="heading">
          <text x="236" y="167" textLength="340">Exploring Student/Teacher Ratios in</text>
          <text x="346" y="197" textLength="121">St. Louis City</text>
        </g>

        <g transform="translate(240 290) scale(.33333)" class="map">
          <g clip-path="url(#city)">
            <rect x="40" y="-230" width="650" height="1300" fill="#c9eac2" />
            <g v-for="z in zones" :key="z.id" :clip-path="`url(#${z.id})`">
              <polygon v-for="(s, i) in z.cells" :key="i" :points="s.p" :fill="fillOf(s.c)" />
            </g>
            <polygon v-for="(s, i) in north" :key="'n' + i" :points="s.p" :fill="fillOf(s.c)" :class="{ strong: s.c === 'b' }" />
            <g transform="translate(0 510)">
              <polygon v-for="(s, i) in south" :key="'s' + i" :points="s.p" :fill="fillOf(s.c)" :class="{ strong: s.c === 'b' }" />
            </g>
          </g>
          <polygon :points="outline" fill="none" />
          <circle v-for="(d, i) in schools" :key="'c' + i" :cx="d.x" :cy="d.y" :r="d.r" :class="{ tiny: d.r < 4 }" />
        </g>

        <path d="M550.700 344L522.500 416.500 550.700 388.500z" fill="url(#arrowHatch)" />
        <path d="M550.700 388.500V344" stroke="#555" stroke-width=".7" />
        <path d="M550.700 343L522.300 416.500 550.700 388.500 579.500 416.500z" fill="none" stroke="#000" stroke-width="3" stroke-linejoin="round" />

        <g class="legend">
          <text x="463.500" y="501" textLength="91">Student-to-Teacher Ratio</text>
          <template v-for="r in ratioRows" :key="r.y">
            <circle :cx="r.r > 8 ? 471.700 : 470.600" :cy="r.y" :r="r.r" fill="#d4e30c" stroke="#333" stroke-width=".8" />
            <text x="484" :y="r.y + 3" :textLength="r.w">{{ r.t }}</text>
          </template>
          <text x="463.500" y="594" textLength="152.500">Median Household Income by Block Group</text>
          <template v-for="(r, i) in incomeRows" :key="r.t">
            <rect x="463.500" :y="599.5 + i * 13" width="14" height="7.500" :fill="palette[i] || 'url(#hatchSmall)'" stroke="#555" stroke-width=".9" />
            <text x="481.800" :y="606 + i * 13" :textLength="r.w">{{ r.t }}</text>
          </template>
        </g>

        <g fill="none" shape-rendering="crispEdges">
          <rect x="194.500" y="655.500" width="148" height="44" stroke="#2d8ac8" />
          <rect x="194.500" y="655.500" width="148" height="44" stroke="#5c0a2c" stroke-dasharray="4 2" />
          <rect v-for="(h, i) in handles" :key="i" :x="h[0] + .5" :y="h[1]" width="10" height="9.500" fill="#fff" stroke="#2d8ac8" />
        </g>
        <g class="credit">
          <text x="206" y="663" textLength="11">cott</text>
          <text x="194" y="671" textLength="38">02/25/2020</text>
          <text x="205" y="680" textLength="127">a Sources: St. Louis City Open Data, MSD</text>
          <text x="194" y="688" textLength="57">US Census Bureau</text>
        </g>
      </svg>

      <aside class="side">
        <div class="tabs"><span class="tab on">Items</span><span class="tab t2">Undo History</span></div>
        <div class="dock"><span>Items</span><svg viewBox="0 0 24 10"><g fill="none" stroke="#666"><rect x=".5" y=".5" width="9" height="9" rx="2" /><rect x="2.500" y="4" width="3.500" height="3.500" /><path d="M4.500 4V2.500H7.500V5.500H6" /><rect x="14.500" y=".5" width="9" height="9" rx="2" /><path d="M16.500 2.500l5 5M21.500 2.500l-5 5" stroke-width="1.800" /></g></svg></div>
        <section class="table">
          <div class="thead">
            <span class="c1"><svg viewBox="0 0 16 12"><path d="M1 6q7-8 14 0q-7 7-14 0z" fill="#ddd" stroke="#999" /><circle cx="8" cy="5.500" r="3" fill="#666" /><circle cx="8" cy="5" r="1" fill="#222" /><path d="M2 3q6-4 12 0" stroke="#aaa" fill="none" /></svg></span>
            <span class="c2"><svg viewBox="0 0 14 16"><path d="M3.500 8V5q0-4 3.500-4t3.500 4v3" fill="none" stroke="#777" stroke-width="1.500" /><rect x="1" y="7.500" width="12" height="7.500" rx="1.500" fill="#555" /></svg></span>
            <span class="c3">Item</span>
          </div>
          <div v-for="it in items" :key="it.t" class="row">
            <span class="check"><svg viewBox="0 0 12 12"><path d="M2.500 6.200l2.300 3.300L9 2" fill="none" stroke="#000" stroke-width="2" /></svg></span>
            <span class="check second" />
            <svg class="kind" viewBox="0 0 14 14" v-html="itemIcons[it.k]" />
            <span class="name" :class="{ bold: it.b }">{{ it.t }}</span>
          </div>
        </section>
        <div class="split"><span /></div>
        <div class="tabs"><span class="tab t3">Layout</span><span class="tab on t4">Item Properties</span><span class="tab t5">Guides</span></div>
        <div class="dock"><span>Item Properties</span><svg viewBox="0 0 24 10"><g fill="none" stroke="#666"><rect x=".5" y=".5" width="9" height="9" rx="2" /><rect x="2.500" y="4" width="3.500" height="3.500" /><path d="M4.500 4V2.500H7.500V5.500H6" /><rect x="14.500" y=".5" width="9" height="9" rx="2" /><path d="M16.500 2.500l5 5M21.500 2.500l-5 5" stroke-width="1.800" /></g></svg></div>
        <div class="label">Label</div>
        <div class="scroller">
          <div class="props">
            <h2>Main Properties</h2>
            <div class="box main">
              <div class="text">D. Scott<br>02/25/2020<br>Data Sources: St. Louis City Open Data, MSDIS, US<br>Census Bureau</div>
              <div class="render"><span class="check" />Render as HTML</div>
              <div class="push">Insert an Expression...</div>
            </div>
            <h2>Appearance</h2>
            <div class="box look">
              <div class="fontrow"><span class="fontbtn">Font</span><span class="mini"><b class="down" /></span></div>
              <div class="colorrow"><span class="cl">Font color</span><span class="swatch"><i /></span><span class="mini"><b class="down" /></span></div>
            </div>
          </div>
          <div class="bar"><span class="arrow"><b class="up" /></span><span class="thumb" /><span class="track" /><span class="arrow bottom"><b class="down" /></span></div>
        </div>
      </aside>
    </main>

    <footer class="status">
      <span class="s1">1 item selected</span><span class="s2">x: 60.3026 mm</span><span class="s3">y: 288.555 mm</span><span class="s4">page: 1</span>
      <span class="combo"><span>70.8%</span><i><b class="down" /></i></span>
      <span class="slider"><i /></span>
      <svg class="corner" viewBox="0 0 14 14"><path d="M2 13h12M4.500 10.500h10M7 8h7M9.500 5.500h5M12 3h2" stroke="#aaa" stroke-dasharray="1 1.500" /></svg>
    </footer>
  </div>
</template>

<style>
html, body { margin: 0; overflow: hidden; background: #2b4a76; }
</style>

<style scoped>
.window { width: 1150px; height: 753px; box-sizing: border-box; border-top: 1px solid #2b4a76; display: flex; flex-direction: column; overflow: hidden; background: #ececec; font-family: Inter, "Liberation Sans", sans-serif; font-size: 13px; color: #222; border-radius: 6px 6px 0 0; }
.window * { box-sizing: border-box; }
.titlebar { height: 22px; flex: none; display: flex; align-items: center; gap: 8px; padding-left: 7px; background: linear-gradient(#e6e6e6, #d0d0d0); border-bottom: 1px solid #a9a9a9; }
.light { width: 12px; height: 12px; border-radius: 50%; }
.red { background: #ff3f48; border: 1px solid #e2303a; }
.amber { background: #ffbd00; border: 1px solid #dfa000; }
.green { background: #00d53c; border: 1px solid #00b92e; }
h1 { margin: 0 0 0 -69px; flex: 1; text-align: center; font-weight: 400; font-size: 13px; line-height: 22px; color: #4a4a4a; letter-spacing: -.1px; }
.toolbar { height: 39px; flex: none; display: flex; align-items: center; padding-left: 4px; background: linear-gradient(#f6f6f6, #ececec); border-bottom: 1px solid #b3b3b3; }
.second { height: 38px; }
.grip { width: 5px; height: 17px; margin-right: 2.500px; flex: none; background: radial-gradient(circle, #b2b2b2 .7px, transparent 1px) 0 0 / 2.500px 3px; }
.btn { width: 33px; height: 30px; flex: none; display: flex; align-items: center; justify-content: center; }
.btn svg, .tool svg { width: 24px; height: 24px; display: block; overflow: visible; }
.sep { width: 7px; height: 19px; flex: none; display: flex; justify-content: center; }
.sep::before { content: ""; width: 1px; background: #ccc; }
.gap { width: 16px; flex: none; display: flex; padding-left: 8px; }
.spin { width: 84px; height: 30px; margin-right: 1px; flex: none; display: flex; border: 1px solid #acacac; border-radius: 3px; background: #fff; color: #bababa; line-height: 29px; overflow: hidden; }
.spin span { flex: 1; padding-left: 4px; font-size: 13px; }
.spin i, .combo i { width: 20px; border-left: 1px solid #acacac; background: linear-gradient(#fff, #f3f3f3); display: flex; align-items: center; justify-content: center; }
.down { border: 4px solid transparent; border-top-color: #4a4a4a; border-bottom: 0; }
.pale { border-top-color: #aaa; }
.up { border: 4px solid transparent; border-bottom-color: #4a4a4a; border-top: 0; }
.body { height: 624px; flex: none; display: flex; }
.tools { width: 39px; flex: none; padding: 5px 0 0 4px; border-right: 1px solid #b0b0b0; background: linear-gradient(90deg, #f7f7f7, #eaeaea); }
.hgrip { display: block; width: 17px; height: 5px; margin: 0 0 2.300px 8px; background: radial-gradient(circle, #b2b2b2 .7px, transparent 1px) 0 0 / 3px 2.500px; }
.tool { width: 31px; height: 32.120px; display: flex; align-items: center; justify-content: center; }
.tool.on { background: linear-gradient(#cfcfcf, #dadada); border: 1px solid #a7a7a7; border-radius: 3px; height: 31px; margin-bottom: 1px; }
.canvas { width: 716px; height: 624px; flex: none; display: block; }
.scale { font-size: 8.500px; fill: #555; letter-spacing: .2px; }
.heading { font-family: "Open Sans", "Noto Sans", sans-serif; font-size: 20px; fill: #000; stroke: #000; stroke-width: .25; }
.map polygon { stroke: #5a605b; stroke-width: 1.700; }
.map polygon.strong { stroke: #111; stroke-width: 2.400; }
.map circle { fill: #d4e30c; stroke: #4c5008; stroke-width: 2; }
.map circle.tiny { fill: #93901a; stroke: #4c3a08; stroke-width: 1.600; }
.legend { font-size: 8px; fill: #111; }
.credit { font-size: 7px; fill: #111; }
.side { flex: 1; min-width: 0; padding-left: 6px; display: flex; flex-direction: column; overflow: hidden; }
.tabs { height: 28px; flex: none; display: flex; align-items: flex-end; padding-top: 1px; border-bottom: 1px solid #b3b3b3; }
.tab { height: 25px; padding: 0 11px; line-height: 27px; border: 1px solid #b3b3b3; border-bottom: 0; border-radius: 3px 3px 0 0; background: #dadada; text-align: center; white-space: nowrap; letter-spacing: -.05px; }
.tab.on { height: 27px; width: 59px; padding: 0; line-height: 27px; background: linear-gradient(#f8f8f8, #ececec); margin-bottom: -1px; }
.t2 { width: 103px; padding: 0; border-left: 0; }
.tab.t4 { width: 118px; letter-spacing: 0; }
.t3 { width: 65px; padding: 0; border-right: 0; }
.t5 { width: 67px; padding: 0; border-left: 0; }
.dock { height: 20px; flex: none; display: flex; justify-content: space-between; align-items: center; padding: 2px 2px 0 4px; font-size: 11px; letter-spacing: .08px; }
.dock svg { width: 24px; height: 10px; }
.table { height: 147px; flex: none; border: 1px solid #b3b3b3; border-right: 0; background: #fff; color: #000; }
.thead { height: 20px; display: flex; border-bottom: 1px solid #b3b3b3; background: linear-gradient(#fff, #efefef); color: #222; }
.thead span { height: 19px; border-right: 1px solid #c2c2c2; display: flex; align-items: center; }
.c1 { width: 27px; padding-left: 2px; } .c1 svg { width: 17px; height: 12px; }
.c2 { width: 27px; padding-left: 3px; } .c2 svg { width: 14px; height: 16px; }
.thead .c3 { border: 0; padding: 1px 0 0 2px; }
.row { height: 18px; display: flex; align-items: center; padding-left: 3px; white-space: nowrap; }
.check { width: 14px; height: 14px; flex: none; border: 1px solid #b4b4b4; background: #fff; }
.check svg { display: block; width: 12px; height: 12px; }
.check.second { margin-left: 13px; height: 14px; }
.kind { width: 14px; height: 14px; margin: 0 7px 0 14px; }
.name { letter-spacing: -.14px; padding-bottom: 1.500px; }
.bold { font-weight: 700; letter-spacing: .12px; }
.split { height: 5px; flex: none; display: flex; justify-content: center; align-items: center; }
.split span { width: 17px; height: 3px; background: radial-gradient(circle, #aaa .7px, transparent 1px) 0 0 / 3px 3px; }
.label { height: 21px; flex: none; padding-left: 5px; line-height: 21px; font-weight: 700; color: #000; background: #c6c6c6; border-bottom: 1px solid #b3b3b3; }
.scroller { flex: 1; min-height: 0; display: flex; border-left: 1px solid #b3b3b3; border-bottom: 1px solid #b3b3b3; }
.props { width: 374px; flex: none; padding-left: 12px; overflow: hidden; }
h2 { margin: 0; height: 31px; padding-top: 9px; display: flex; align-items: center; font-size: 13px; line-height: 22px; color: #000; letter-spacing: .08px; }
h2::before { content: ""; border: 6px solid transparent; border-top: 7px solid #333; border-bottom: 0; margin: 0 8px 0 1px; }
.box { width: 351px; padding: 12px; border: 1px solid #d0d0d0; border-radius: 2px; background: #e8e8e8; }
.main { height: 235px; }
.text { width: 324px; height: 150px; padding: 4px 4px; border: 1px solid #b3b3b3; background: #fff; line-height: 16px; white-space: nowrap; letter-spacing: -.11px; }
.render { height: 14px; margin-top: 10px; display: flex; align-items: center; gap: 5px; letter-spacing: -.15px; }
.push { width: 324px; height: 24px; margin-top: 10px; text-align: center; line-height: 23px; letter-spacing: -.12px; }
.push, .fontbtn, .mini, .swatch { border: 1px solid #adadad; border-radius: 3px; background: linear-gradient(#fefefe, #ececec); }
h2:nth-of-type(2) { height: 26px; padding-top: 5px; }
.look { height: 90px; }
.fontrow { display: flex; height: 22px; }
.fontbtn { width: 312px; padding-left: 6px; font-size: 11px; line-height: 21px; color: #000; letter-spacing: -.3px; }
.mini { width: 12px; display: flex; align-items: center; justify-content: center; }
.colorrow { display: flex; height: 28px; margin-top: 6px; }
.cl { width: 113px; line-height: 29px; color: #000; letter-spacing: -.05px; }
.swatch { width: 108px; padding: 5px 4px; } .swatch i { display: block; height: 17px; background: #000; border-radius: 2px; }
.bar { flex: 1; border-left: 1px solid #b3b3b3; background: #dedede; display: flex; flex-direction: column; }
.arrow { height: 14px; display: flex; align-items: center; justify-content: center; background: #fafafa; border-bottom: 1px solid #b3b3b3; }
.thumb { height: 152px; background: linear-gradient(90deg, #fff, #eee); border-bottom: 1px solid #b3b3b3; }
.track { flex: 1; }
.arrow.bottom { border-top: 1px solid #b3b3b3; border-bottom: 0; }
.status { flex: 1; display: flex; align-items: center; padding: 3px 0 0 5px; white-space: nowrap; color: #111; letter-spacing: -.07px; }
.s1 { width: 570px; } .s2 { width: 106px; } .s3 { width: 106px; } .s4 { width: 106px; }
.combo { width: 128px; height: 24px; margin-top: -1px; display: flex; border: 1px solid #acacac; border-radius: 2px; background: #fff; line-height: 23px; }
.combo span { flex: 1; padding-left: 3px; }
.slider { width: 98px; height: 14px; margin: -3px 0 0 7px; display: flex; align-items: center; background: linear-gradient(#3c8bee, #3c8bee) 0 5px / 7px 4px no-repeat, linear-gradient(#bababa, #dadada) 0 5px / 98px 4px no-repeat; border-radius: 2px; }
.slider i { width: 12px; height: 12px; margin-left: 6px; border: 1px solid #aaa; border-radius: 3px; background: #fff; }
.corner { width: 14px; height: 14px; margin: 8px 0 0 auto; }
</style>
